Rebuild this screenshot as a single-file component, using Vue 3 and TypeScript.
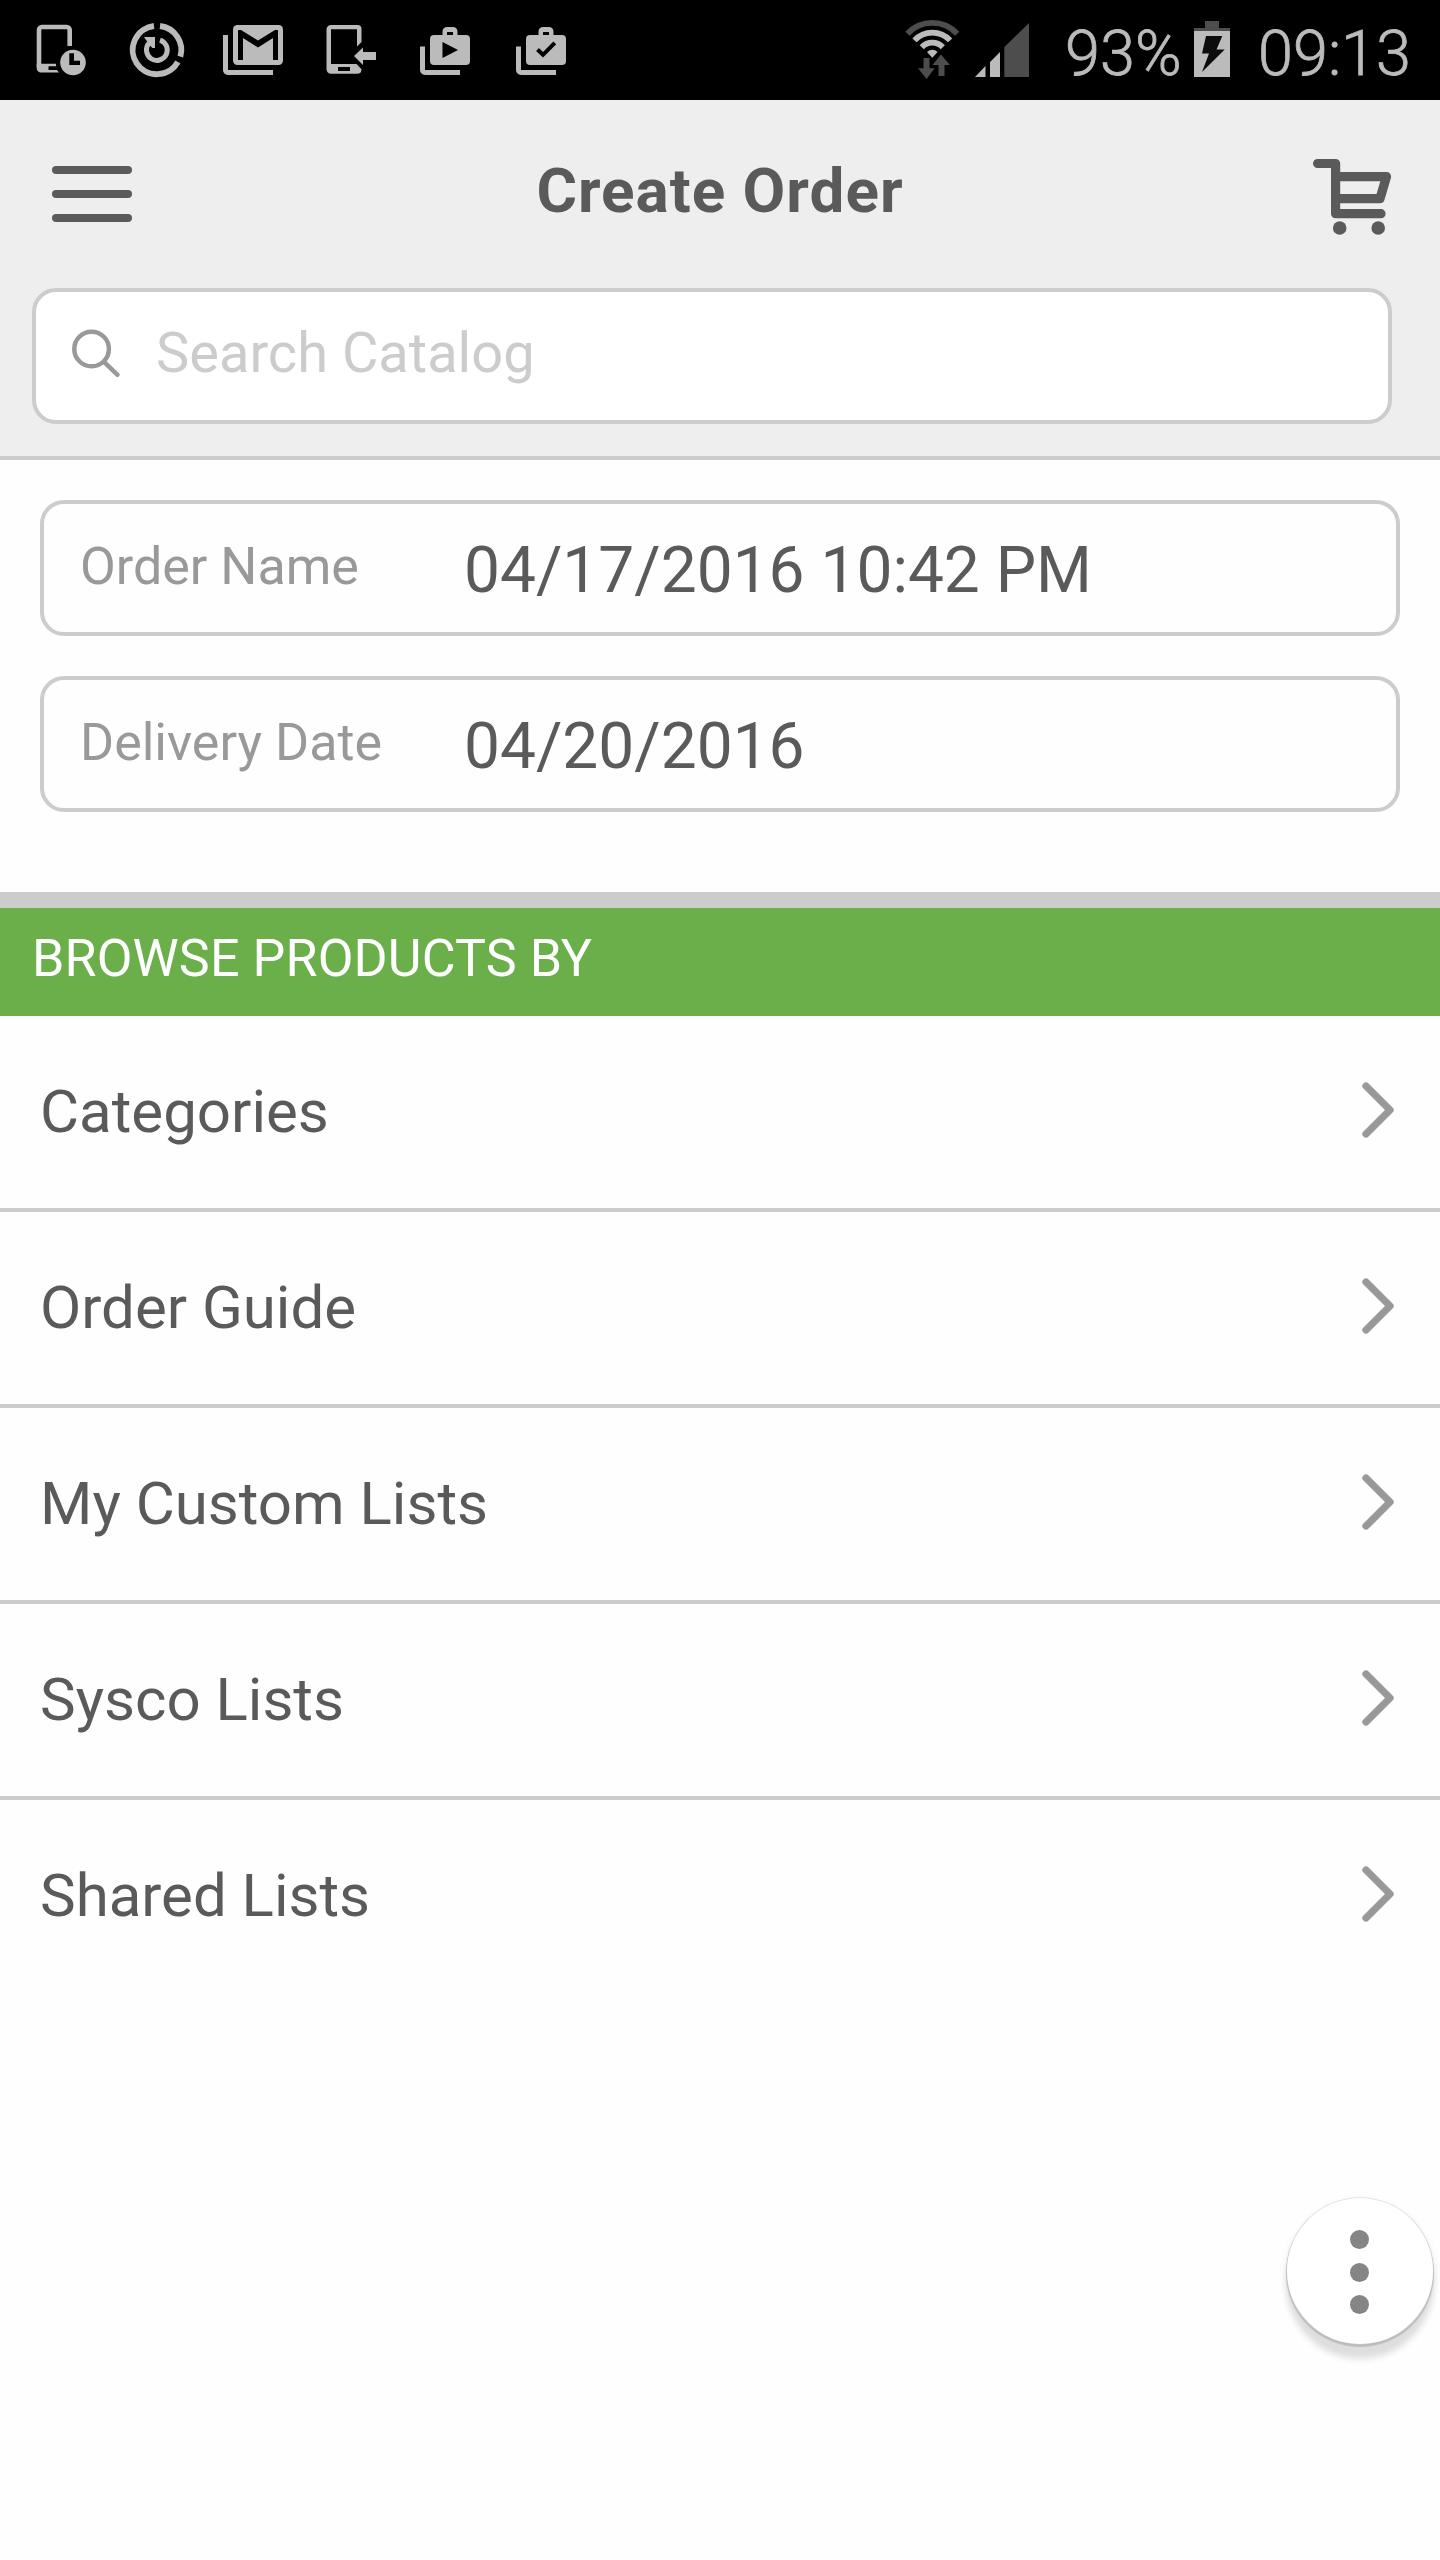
<script setup lang="ts">
interface Field {
  label: string
  value: string
}

const fields: Field[] = [
  { label: 'Order Name', value: '04/17/2016 10:42 PM' },
  { label: 'Delivery Date', value: '04/20/2016' },
]

const lists: string[] = ['Categories', 'Order Guide', 'My Custom Lists', 'Sysco Lists', 'Shared Lists']
</script>

<template>
  <div class="screen">
    <div class="status">
      <div class="notifications">
        <svg viewBox="12 0 96 100">
          <path d="M69.7 46V30a3 3 0 0 0-3-3H42a3 3 0 0 0-3 3v37" fill="none" stroke="#bbb" stroke-width="4.6" />
          <path d="M36.7 63.8H56v2.4h-7.5V70H57l2 2.5H41a4.3 4.3 0 0 1-4.3-4.3z" />
          <circle cx="73" cy="62.5" r="12.8" />
          <path d="M69.3 53.3H74v7.4h6V65H69.3z" fill="#000" />
        </svg>
        <svg viewBox="108 0 96 100">
          <g fill="none" stroke="#bbb">
            <path d="M160 26a24.2 24.2 0 0 1 20.4 30.6M177.9 62A24.2 24.2 0 1 1 154 26" stroke-width="5.8" />
            <path d="M160 40.1A10.4 10.4 0 1 1 149 43.2" stroke-width="5" />
          </g>
          <path d="M144 37h11v11h-2.5l-3-3z" />
        </svg>
        <svg viewBox="204 0 96 100">
          <path d="M223 35h5v35h45v5h-45a5 5 0 0 1-5-5z" />
          <rect x="233" y="25" width="50" height="40" rx="4.5" />
          <path d="M238 60V30h3l17 10.5L275 30h3v30h-5V38l-15 9.5L243 38v22z" fill="#000" />
        </svg>
        <svg viewBox="300 0 96 100">
          <path
            fill-rule="evenodd"
            d="M331 25h26.500a4 4 0 0 1 4 4V42l-4.500 4.500V29.300H331V64h25.500l5 5.200q0 4.500-4.300 4.500H331a4.500 4.500 0 0 1-4.500-4.500V29.500a4.500 4.500 0 0 1 4.500-4.500zM338 67v4h12v-4z"
          />
          <path d="M354 56l9-8.500V52h13v8h-13v5z" />
        </svg>
        <svg viewBox="396 0 96 100">
          <path d="M420 46.500h5V70h35v5h-35a5 5 0 0 1-5-5z" />
          <path
            fill-rule="evenodd"
            d="M434 35h8.500v-3q0-5 5-5h5q5 0 5 5v3h8.500a4 4 0 0 1 4 4v22a4 4 0 0 1-4 4h-32a4 4 0 0 1-4-4V39a4 4 0 0 1 4-4zM447 32v3h6v-3z"
          />
          <path d="M442.500 42l15.500 8-15.500 8z" fill="#000" />
        </svg>
        <svg viewBox="492 0 96 100">
          <path d="M516 46.500h5V70h35v5h-35a5 5 0 0 1-5-5z" />
          <path
            fill-rule="evenodd"
            d="M530 35h8.500v-3q0-5 5-5h5q5 0 5 5v3h8.500a4 4 0 0 1 4 4v22a4 4 0 0 1-4 4h-32a4 4 0 0 1-4-4V39a4 4 0 0 1 4-4zM543 32v3h6v-3z"
          />
          <path d="M537.500 49.500l5.500 5.300 11.800-12" fill="none" stroke="#000" stroke-width="4" />
        </svg>
      </div>
      <div class="system">
        <svg class="wifi" viewBox="900 0 66 100">
          <g fill="none" stroke-width="5.800">
            <path d="M907.400 33.800a34 34 0 0 1 49.800 0" stroke="#4d4d4d" />
            <path d="M914.500 40.400a24.300 24.300 0 0 1 35.600 0M921.800 47.200a14.400 14.400 0 0 1 21 0" stroke="#bbb" />
          </g>
          <path d="M927 52a7.500 7.500 0 0 1 10.600 0l-5.300 5.700z" />
          <path d="M923.500 58h6v10.300h5.200L926.500 79 918 68.300h5.500zM941 54.500l8.800 10.500h-5.300v11h-6V65h-6z" fill="#4d4d4d" />
        </svg>
        <svg class="signal" viewBox="966 0 98 100">
          <path d="M975 77l10.500-11v11zM990 77V62l10-10v25z" />
          <path d="M1004.300 77V47L1029 23v54z" fill="#4d4d4d" />
        </svg>
        <span class="percent">93%</span>
        <svg class="battery" viewBox="1190 0 66 100">
          <path d="M1205 21h14v7h11v3h-36v-3h11z" fill="#4d4d4d" />
          <path d="M1194 31h36v46h-36z" />
          <path d="M1206 36h16.300l-5.800 13.500h8.200L1202 72l7-18.500h-7z" fill="#0c0c0c" />
        </svg>
        <span class="clock">09:13</span>
      </div>
    </div>

    <header class="header">
      <div class="titlebar">
        <div class="menu"><i></i><i></i><i></i></div>
        <h1>Create Order</h1>
        <svg class="cart" viewBox="1308 154 88 84">
          <g fill="none" stroke="#5a5a5a" stroke-width="9.200" stroke-linecap="round" stroke-linejoin="round">
            <path d="M1317.600 163.500h18v50.200h45.400M1335.600 176.600h50.900l-6.500 22h-44.400" />
          </g>
          <circle cx="1339.700" cy="228" r="6.800" fill="#5a5a5a" />
          <circle cx="1378.200" cy="228" r="6.800" fill="#5a5a5a" />
        </svg>
      </div>
      <div class="search">
        <svg viewBox="68 324 54 54">
          <g fill="none" stroke="#999" stroke-width="4.500" stroke-linecap="round">
            <circle cx="91.600" cy="349" r="17.300" />
            <path d="M104.500 362.300l13 12.500" />
          </g>
        </svg>
        <span>Search Catalog</span>
      </div>
    </header>

    <section class="fields">
      <div v-for="f in fields" :key="f.label" class="field">
        <span class="label">{{ f.label }}</span>
        <span class="value">{{ f.value }}</span>
      </div>
    </section>

    <h2 class="section-title"><span>BROWSE PRODUCTS BY</span></h2>
    <ul class="lists">
      <li v-for="name in lists" :key="name">
        <span>{{ name }}</span>
        <svg viewBox="0 0 34 58">
          <path d="M6 5l24 24L6 53" fill="none" stroke="#999" stroke-width="7.300" stroke-linecap="round" stroke-linejoin="round" />
        </svg>
      </li>
    </ul>

    <div class="fab"><i></i><i></i><i></i></div>
  </div>
</template>

<style>
body {
  margin: 0;
  background: #fefefe;
}
</style>

<style scoped>
.screen {
  position: relative;
  width: 1440px;
  height: 2560px;
  overflow: hidden;
  background: #fefefe;
  font-family: Roboto, sans-serif;
  color: #5a5a5a;
  white-space: nowrap;
}
svg {
  display: block;
  flex: none;
}
.status {
  display: flex;
  justify-content: space-between;
  height: 100px;
  padding-left: 12px;
  background: #000;
  color: #bbb;
  fill: #bbb;
}
.notifications,
.system {
  display: flex;
}
.notifications svg {
  width: 96px;
  height: 100px;
}
.system {
  font-size: 63px;
  font-weight: 300;
  -webkit-text-stroke: 0.800px #bbb;
  line-height: 107px;
}
.system svg {
  height: 100px;
}
.wifi {
  width: 66px;
}
.signal {
  width: 98px;
}
.percent {
  box-sizing: border-box;
  width: 126px;
  padding-left: 1px;
}
.battery {
  width: 66px;
}
.clock {
  box-sizing: border-box;
  width: 184px;
  padding-left: 2px;
}
.header {
  box-sizing: border-box;
  height: 360px;
  padding: 0 48px 0 32px;
  background: #eee;
  border-bottom: 4px solid #ccc;
}
.titlebar {
  display: flex;
  justify-content: space-between;
  height: 188px;
  padding: 0 0 0 20px;
}
.menu {
  display: flex;
  flex-direction: column;
  gap: 16px;
  width: 80px;
  padding-top: 66px;
}
.menu i {
  height: 8px;
  border-radius: 4px;
  background: #5a5a5a;
}
h1 {
  margin: 0;
  font-size: 62px;
  font-weight: 700;
  letter-spacing: 1px;
  line-height: 182px;
}
.cart {
  width: 88px;
  height: 84px;
  margin: 54px -4px 0 0;
}
.search {
  display: flex;
  box-sizing: border-box;
  height: 136px;
  border: 4px solid #ccc;
  border-radius: 24px;
  background: #fff;
  font-size: 56px;
  line-height: 122px;
  color: #ccc;
}
.search svg {
  width: 54px;
  height: 54px;
  margin: 32px 34px 0 32px;
}
.fields {
  display: flex;
  flex-direction: column;
  gap: 40px;
  box-sizing: border-box;
  height: 432px;
  padding: 40px;
}
.field {
  display: flex;
  box-sizing: border-box;
  height: 136px;
  padding-left: 36px;
  border: 4px solid #ccc;
  border-radius: 24px;
}
.label {
  width: 384px;
  font-size: 52px;
  line-height: 125px;
  color: #999;
}
.value {
  font-size: 64px;
  line-height: 134px;
}
.section-title {
  box-sizing: border-box;
  height: 124px;
  margin: 0;
  padding-left: 32px;
  border-top: 16px solid #ccc;
  background: #6baf4a;
  color: #fff;
  font-size: 52px;
  font-weight: 400;
  letter-spacing: 0.130px;
  line-height: 101px;
}
.lists {
  margin: 0;
  padding: 0;
  list-style: none;
}
.lists li {
  display: flex;
  align-items: flex-start;
  justify-content: space-between;
  box-sizing: border-box;
  height: 196px;
  padding: 0 46px 0 40px;
  border-bottom: 4px solid #ccc;
  font-size: 60px;
  line-height: 192px;
}
.lists li:last-child {
  border-bottom: none;
}
.lists svg {
  width: 34px;
  height: 58px;
  margin-top: 64.500px;
}
.fab {
  position: absolute;
  left: 1287px;
  top: 2198px;
  display: flex;
  flex-direction: column;
  align-items: center;
  gap: 13.500px;
  box-sizing: border-box;
  width: 146px;
  height: 146px;
  padding: 32px 1px 0 0;
  border-radius: 50%;
  background: #fff;
  box-shadow: 0 0 1px 0.500px #d0d0d0, 0 2px 1px 1px #bbb, 0 15px 6px 0 #dedede, 0 4px 10px #e8e8e8;
}
.fab i {
  width: 19px;
  height: 19px;
  border-radius: 50%;
  background: #858585;
}
</style>
